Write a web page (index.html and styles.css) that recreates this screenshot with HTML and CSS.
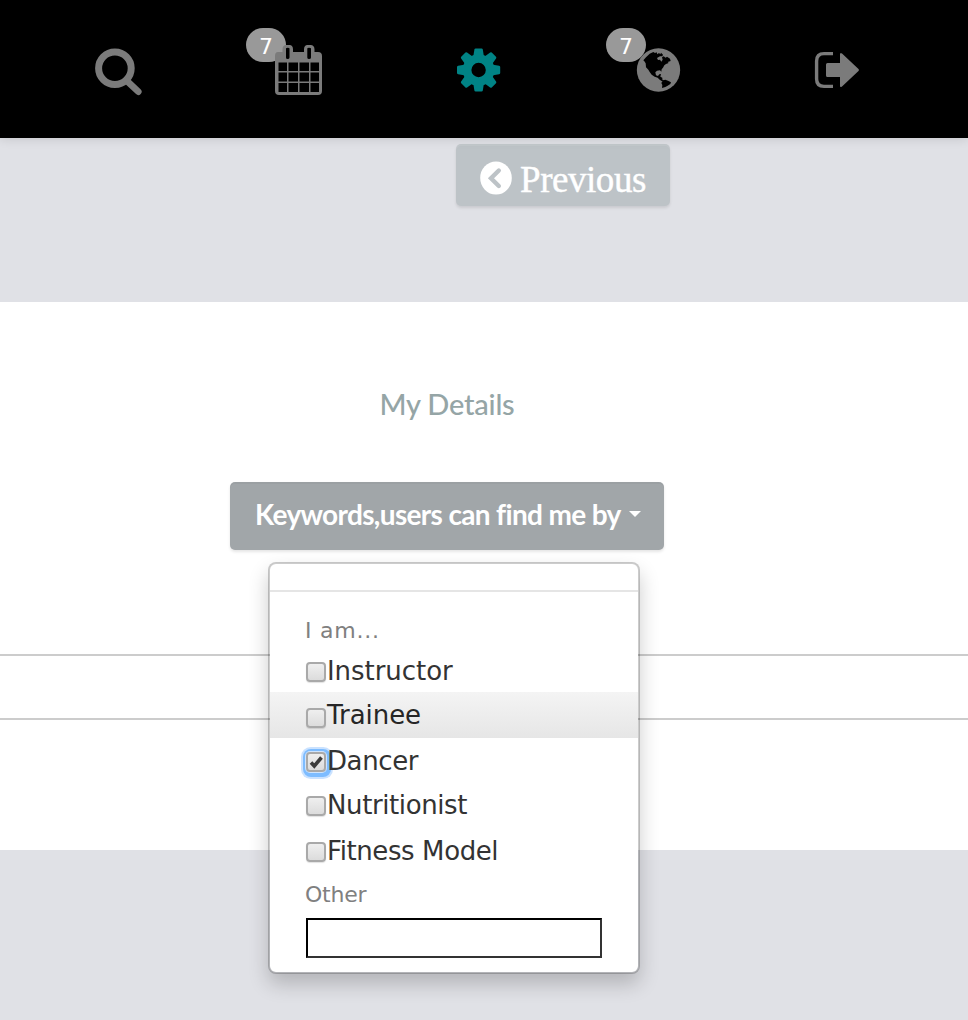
FILE: index.html
```html
<!DOCTYPE html>
<html lang="en">
<head>
<meta charset="utf-8">
<title>My Details</title>
<link rel="stylesheet" href="styles.css">
</head>
<body>
<nav class="topbar">
  <a class="nav-item">
    <svg class="icon" width="60" height="60" viewBox="0 0 60 60"><circle cx="26.900" cy="28.200" r="16.300" fill="none" stroke="#7b7b7b" stroke-width="7"/><path d="M39 41 50.300 51.700" stroke="#7b7b7b" stroke-width="6.600" stroke-linecap="round"/></svg>
  </a>
  <a class="nav-item">
    <span class="badge">7</span>
    <svg class="icon" width="60" height="60" viewBox="0 0 60 60"><path fill="#7b7b7b" fill-rule="evenodd" d="M10 12H14.500V9.500Q14.500 5 18.200 5H21.500Q25 5 25 9.500V12H36V9.500Q36 5 39.500 5H42.500Q46.500 5 46.500 9.500V12H50Q54 12 54 16V51Q54 55 50 55H11Q7 55 7 51V16Q7 12 10 12zM18 8.500V17.500Q18 19 19.500 19Q21.500 19 21.500 17.500V8.500Q21.500 7.800 19.700 7.800Q18 7.800 18 8.500zM39.300 8.500V17.500Q39.300 19 41 19Q43 19 43 17.500V8.500Q43 7.800 41 7.800Q39.300 7.800 39.300 8.500zM10.500 22.500V31H19V22.500zM20.500 22.500V31H30V22.500zM31.500 22.500V31H41V22.500zM42.500 22.500V31H51V22.500zM10.500 32.500V41.500H19V32.500zM20.500 32.500V41.500H30V32.500zM31.500 32.500V41.500H41V32.500zM42.500 32.500V41.500H51V32.500zM10.500 43V52H19V43zM20.500 43V52H30V43zM31.500 43V52H41V43zM42.500 43V52H51V43z"/></svg>
  </a>
  <a class="nav-item">
    <svg class="icon" width="60" height="60" viewBox="-30.600 -30 60 60"><defs><path id="tooth" d="M-5.400-13-4.200-20.500Q-4-21.600-3-21.600H3Q4-21.600 4.200-20.500L5.400-13z"/></defs><g fill="#008385"><path fill-rule="evenodd" d="M0-15.800a15.800 15.800 0 1 1 0 31.600a15.800 15.800 0 1 1 0-31.600zM0-7.200a7.200 7.200 0 1 0 0 14.400a7.200 7.200 0 1 0 0-14.400z"/><use href="#tooth"/><use href="#tooth" transform="rotate(45)"/><use href="#tooth" transform="rotate(90)"/><use href="#tooth" transform="rotate(135)"/><use href="#tooth" transform="rotate(180)"/><use href="#tooth" transform="rotate(225)"/><use href="#tooth" transform="rotate(270)"/><use href="#tooth" transform="rotate(315)"/></g></svg>
  </a>
  <a class="nav-item">
    <span class="badge">7</span>
    <svg class="icon" width="60" height="60" viewBox="594 60 180 180"><circle cx="685.500" cy="150" r="65" fill="#7b7b7b"/><path fill="#000" d="M640 121 648 112 659 101 670 96 675 99 680 97 682 103 687 99 691 103 693 98 699 104 697 109 690 109 681 114 684 120 690 119 694 125 698 119 696 112 701 109 707 113 711 110 720 116 722 123 713 126 716 129 708 132 703 136 699 143 695 148 694 155 690 151 681 152 676 157 678 166 684 168 688 163 693 162 691 170 697 173 697 179 702 181 696 184 689 179 683 173 674 170 665 164 659 156 655 149 648 142 647 130 643 124z"/><path fill="#000" d="M699 181 706 179 714 182 723 187 721 192 713 197 706 201 696 204 697 195 694 189z"/></svg>
  </a>
  <a class="nav-item">
    <svg class="icon" width="60" height="60" viewBox="0 0 60 60"><path d="M25 13.600H16Q8.600 13.600 8.600 21V39Q8.600 46.400 16 46.400H25" fill="none" stroke="#7b7b7b" stroke-width="3.400"/><path fill="#7b7b7b" d="M18 24.500Q18 23 19.500 23H32V14.500Q32 12 34 13.400L50.500 29Q51.500 30 50.500 31L34 46.400Q32 48 32 45.500V37H19.500Q18 37 18 35.500z"/></svg>
  </a>
</nav>
<div class="toolbar">
  <button class="btn btn-prev"><svg width="32" height="34" viewBox="0 0 32 34"><ellipse cx="16" cy="17" rx="15.800" ry="16.500" fill="#fff"/><path d="M18.800 9.500 11 17.300 18.800 25" fill="none" stroke="#bdc3c7" stroke-width="4.400" stroke-linecap="round" stroke-linejoin="miter"/></svg><span class="prev-label">Previous</span></button>
</div>
<main class="panel">
  <h1 class="title"><span>My Details</span></h1>
  <div class="dropdown">
    <button class="btn btn-keywords"><span class="kw-label">Keywords,users can find me by</span><span class="caret"></span></button>
    <div class="menu">
      <div class="divider"></div>
      <div class="menu-header">I am...</div>
      <label class="option wide"><span class="box"></span>Instructor</label>
      <label class="option wide hovered"><span class="box"></span>Trainee</label>
      <label class="option"><span class="box focused"><svg width="16" height="16" viewBox="0 0 16 16"><path d="M3 8.500 6.300 12 13.500 3.500" fill="none" stroke="#3c3c3c" stroke-width="3.600"/></svg></span>Dancer</label>
      <label class="option tall"><span class="box"></span>Nutritionist</label>
      <label class="option"><span class="box"></span>Fitness Model</label>
      <div class="menu-header other">Other</div>
      <input class="other-input" type="text" aria-label="Other">
    </div>
  </div>
  <div class="field-row"></div>
</main>
</body>
</html>
```
FILE: styles.css
```css
* { box-sizing: border-box; }
body {
  margin: 0;
  height: 1020px;
  overflow: hidden;
  background: #e0e1e6;
  font-family: "DejaVu Sans", sans-serif;
}
.topbar {
  height: 138px;
  background: #000;
  padding: 40px 0 0 28px;
  display: flex;
  box-shadow: 0 1px 10px rgba(0, 0, 0, .12);
  position: relative;
}
.nav-item {
  flex: 0 0 180px;
  height: 60px;
  display: flex;
  justify-content: center;
  position: relative;
}
.badge {
  position: absolute;
  left: 38px;
  top: -12px;
  width: 40px;
  height: 34px;
  border-radius: 17px;
  background: #999;
  color: #fff;
  font: 22px/37px "DejaVu Sans", sans-serif;
  text-align: center;
}
.icon { display: block; position: relative; }
.toolbar {
  height: 164px;
  padding: 6px 0 0 456px;
}
.btn {
  border: 0;
  border-radius: 5px;
  color: #fff;
  display: flex;
  align-items: center;
  white-space: nowrap;
}
.btn-prev {
  width: 214px;
  height: 62px;
  padding: 6px 0 0 24px;
  gap: 8px;
  background: #bdc3c7;
  box-shadow: inset 0 2px 0 rgba(255, 255, 255, .1), 0 2px 3px rgba(0, 0, 0, .1);
}
.prev-label {
  padding-top: 4px;
  font: 37px/44px "Liberation Serif", serif;
  letter-spacing: -.45px;
  -webkit-text-stroke: .4px #fff;
}
.panel {
  height: 548px;
  background: #fff;
  padding-top: 80px;
}
.title {
  margin: 0 0 56px;
  width: 894px;
  height: 44px;
  text-align: center;
  font: 500 29px/43px Lato, sans-serif;
  letter-spacing: -.2px;
  color: #95a5a6;
}
.dropdown {
  position: relative;
  width: 434px;
  margin-left: 230px;
}
.btn-keywords {
  width: 434px;
  height: 68px;
  padding: 0 0 4px 25px;
  gap: 8px;
  background: #a1a6a9;
  box-shadow: inset 0 2px 0 rgba(0, 0, 0, .03), 0 2px 3px rgba(0, 0, 0, .1);
}
.kw-label {
  font: bold 28px/40px Lato, sans-serif;
  letter-spacing: -.65px;
}
.caret {
  border: 6px solid transparent;
  border-top-color: #fff;
  border-bottom: 0;
}
.menu {
  position: absolute;
  left: 38px;
  top: 80px;
  width: 372px;
  height: 412px;
  padding-top: 26px;
  background: #fff;
  background-clip: padding-box;
  border: 2px solid rgba(0, 0, 0, .2);
  border-radius: 8px;
  box-shadow: 0 10px 20px rgba(0, 0, 0, .2);
}
.divider { height: 2px; background: #e5e5e5; }
.menu-header {
  height: 56px;
  padding: 17px 0 0 35px;
  font-size: 22px;
  line-height: 44px;
  letter-spacing: .75px;
  color: #808080;
}
.option {
  display: flex;
  align-items: flex-start;
  height: 44px;
  padding-left: 36px;
  font-size: 26px;
  line-height: 46px;
  letter-spacing: -.4px;
  color: #333;
}
.option.wide { letter-spacing: -.05px; }
.option.hovered {
  height: 46px;
  color: #262626;
  background: linear-gradient(#f4f4f4, #e6e6e6);
}
.option.tall { height: 46px; }
.box {
  flex: none;
  width: 20px;
  height: 20px;
  margin: 14px 1px 0 0;
  border: 2px solid #a9a9a9;
  border-radius: 4px;
  background: linear-gradient(#efefef, #dcdcdc);
  box-shadow: 0 1px 1px rgba(0, 0, 0, .12);
}
.hovered .box { margin-top: 16px; }
.box.focused { box-shadow: 0 0 0 1px #cfe4fd, 1px 1px 0 4px #7dbcff, 1px 1px 0 6px #cae2ff; }
.box svg { display: block; }
.menu-header.other {
  height: 46px;
  padding-top: 0;
  line-height: 46px;
  letter-spacing: -.2px;
}
.other-input {
  display: block;
  width: 296px;
  height: 40px;
  margin-left: 36px;
  border: 2px solid #333;
  border-top-color: #000;
  border-left-color: #000;
  background: #fff;
}
.field-row {
  height: 66px;
  margin-top: 104px;
  border-top: 2px solid #ccc;
  border-bottom: 2px solid #ccc;
}
```
